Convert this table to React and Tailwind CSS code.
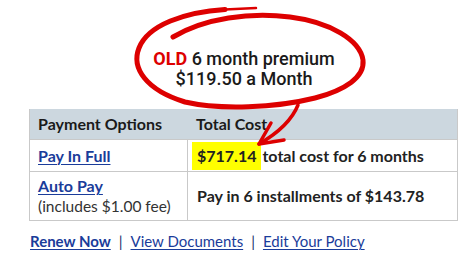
import React from 'react';

const body = { fontFamily: 'Lato, "Liberation Sans", sans-serif' };
const head = { fontFamily: 'Roboto, "Liberation Sans", sans-serif' };

export default function App() {
  return (
    <div className="relative w-[468px] h-[268px] bg-white overflow-hidden text-[#222]" style={body}>
      {/* old premium callout */}
      <div className="h-[109px] pt-[49px] flex flex-col items-center pl-[20px] text-[18px] leading-[20px] font-medium text-[#1a1a1a]" style={head}>
        <p><span className="font-bold text-[#dd0000]">OLD</span> 6 month premium</p>
        <p>$119.50 a Month</p>
      </div>

      <div className="ml-[29px] w-[429px] border border-t-0 border-[#c9c9c9] text-[16px]">
        <div className="grid grid-cols-[157px_272px] h-[30px] bg-[#ccd7df] font-bold text-[#1a1a1a]">
          <div className="pl-[8px] flex items-center">Payment Options</div>
          <div className="pl-[9px] flex items-center">Total Cost</div>
        </div>
        <div className="grid grid-cols-[157px_272px] h-[32px] border-t border-[#c9c9c9]">
          <div className="pl-[8px] flex items-center">
            <a href="#" className="font-bold text-[#1a3c9a] underline underline-offset-2 decoration-1">Pay In Full</a>
          </div>
          <div className="pl-[4px] flex items-center border-l border-[#c9c9c9] font-bold">
            <span className="bg-[#ffff00] px-[5px] py-[2px] mr-[1px]">$717.14</span>
            <span>total cost for 6 months</span>
          </div>
        </div>
        <div className="grid grid-cols-[157px_272px] h-[49px] border-t border-[#c9c9c9]">
          <div className="pl-[8px] flex flex-col justify-center leading-[20px]">
            <a href="#" className="font-bold text-[#1a3c9a] underline underline-offset-2 decoration-1">Auto Pay</a>
            <span className="text-[#333] text-[15.5px]">(includes $1.00 fee)</span>
          </div>
          <div className="pl-[9px] flex items-center border-l border-[#c9c9c9] font-bold">
            Pay in 6 installments of $143.78
          </div>
        </div>
      </div>

      <div className="mt-[9px] ml-[30px] flex items-center gap-[8px] text-[15px] text-[#1a3c9a]">
        <a href="#" className="font-bold underline underline-offset-2 decoration-1">Renew Now</a>
        <span className="text-[#1a2f6e]">|</span>
        <a href="#" className="underline underline-offset-2 decoration-1">View Documents</a>
        <span className="text-[#1a2f6e]">|</span>
        <a href="#" className="underline underline-offset-2 decoration-1">Edit Your Policy</a>
      </div>

      {/* hand drawn circle and arrow */}
      <svg className="absolute inset-0 pointer-events-none" width="468" height="268" viewBox="0 0 468 268" fill="none" stroke="#dd0000" strokeLinecap="round" strokeLinejoin="round">
        <path d="M256 8 L225 9.5" strokeWidth="2.5" />
        <path d="M225 9.5 C185 12 148 25 139 48 C131 68 146 90 185 102 C220 110 275 108 315 98 C345 90 365 77 363 60 C360 40 330 22 290 17 C250 12 205 18 173 37" strokeWidth="5" />
        <path d="M298 105 C292 120 278 133 259 144" strokeWidth="3.5" />
        <path d="M271 123 L259 144 L284 140" strokeWidth="3.5" />
      </svg>
    </div>
  );
}
